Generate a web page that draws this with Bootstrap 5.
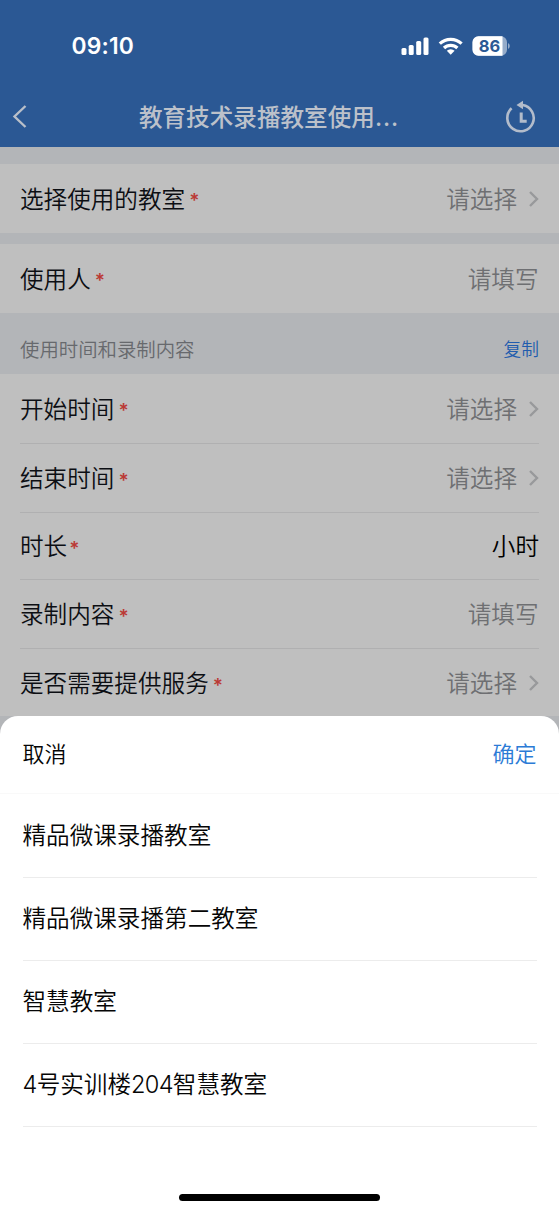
<!DOCTYPE html>
<html lang="zh-CN">
<head>
<meta charset="utf-8">
<meta name="viewport" content="width=device-width, initial-scale=1">
<title>教育技术录播教室使用</title>
<link href="https://cdn.jsdelivr.net/npm/bootstrap@5.3.0/dist/css/bootstrap.min.css" rel="stylesheet">
<style>
  body { font-family: Inter, "Noto Sans CJK SC", sans-serif; font-size: 23.6px; font-weight: 350; line-height: 34px; color: #0c0e13; background: #b3b5b8; }
  svg { display: block; flex: none; }
  .app-head { height: 147px; background: #2b5894; }
  .status-bar { height: 87px; padding: 4px 49.5px 0 71.5px; }
  .clock { font-size: 22.8px; font-weight: 600; letter-spacing: .2px; }
  .title-bar { height: 60px; padding: 0 22px 0 12px; color: #bcc1ca; }
  .title-text { font-weight: 500; padding: 1px 0 0 5px; }
  .dots { letter-spacing: .9px; }
  .form-area { height: 568.5px; padding-top: 17px; overflow: hidden; }
  .form-row { height: 69px; padding: 0 20px; background: #bfbfbf; }
  .form-row span { position: relative; top: 1px; }
  .gap-row { margin-bottom: 11px; }
  .req { color: #bb3a35; font-size: 19px; font-weight: 600; line-height: 20px; margin-left: 4px; padding-top: 3px; font-family: Inter, sans-serif; }
  .req-tight { margin-left: 2px; }
  .hint { color: #6e6f72; }
  .pick { margin-right: 10px; }
  .fill { margin-right: .5px; }
  .group-head { height: 61px; padding: 13px 20px 0; font-size: 19.4px; color: #67696d; }
  .copy-link { font-size: 17.7px; color: #215cae; }
  .lined > .form-row + .form-row > div { border-top: 1px solid #b0b0b1; }
  .sheet { height: 496.5px; background: #fff; border-radius: 18px 18px 0 0; color: #050505; }
  .sheet-head { height: 78.5px; padding: 0 22.5px 1px; font-size: 22px; border-bottom: 1px solid #f9f9f9; }
  .ok { color: #2b7bd6; }
  .option-list { padding: 0 22.5px; }
  .option { height: 83.1px; border-bottom: 1px solid #ececec; }
  .option:first-child { height: 84px; }
  .num { letter-spacing: -.7px; }
  .home-bar { width: 201px; height: 7px; margin-bottom: 11.5px; background: #000; }
</style>
</head>
<body>
<header class="app-head">
  <div class="status-bar d-flex align-items-center justify-content-between text-white">
    <span class="clock">09:10</span>
    <svg width="109" height="22" viewBox="0 0 109 22" fill="#fff">
      <rect x="0.5" y="13" width="5" height="7" rx="1.5"/>
      <rect x="7.7" y="10" width="5" height="10" rx="1.5"/>
      <rect x="15.2" y="6" width="5" height="14" rx="1.5"/>
      <rect x="22.5" y="2.5" width="5" height="17.5" rx="1.5"/>
      <g fill="none" stroke="#fff" stroke-width="3.2">
        <path d="M38.8 8.7a15.7 15.7 0 0 1 21.8 0"/>
        <path d="M43 13a9.6 9.6 0 0 1 13.4 0"/>
      </g>
      <path d="M45.8 15.8a5.7 5.7 0 0 1 7.8 0L49.7 19.8z"/>
      <path d="M77.5 1.2h22.5a6 6 0 0 1 6 6v7.5a6 6 0 0 1-6 6h-22.5a6 6 0 0 1-6-6v-7.5a6 6 0 0 1 6-6z" fill="#95abc9"/>
      <path d="M77.5 1.2h24v19.500h-24a6 6 0 0 1-6-6v-7.500a6 6 0 0 1 6-6z"/>
      <path d="M107 8v6q1.800-1 1.800-3t-1.800-3z" fill="#95abc9"/>
      <text x="88.500" y="17" text-anchor="middle" font-family="Inter, sans-serif" font-size="16.500" font-weight="700" fill="#2b5894">86</text>
    </svg>
  </div>
  <div class="title-bar d-flex align-items-center justify-content-between">
    <svg width="16" height="24" viewBox="0 0 16 24" fill="none" stroke="#b9bfc9" stroke-width="2.400"><path d="M13.500 1 2.500 11.500l11 10.500"/></svg>
    <span class="title-text">教育技术录播教室使用<span class="dots">...</span></span>
    <svg width="32" height="34" viewBox="0 0 32 34" fill="none" stroke="#b3bccb" stroke-width="2.600">
      <path d="M6.600 8.300a13.200 13.200 0 1 0 11-3.300"/>
      <path d="M16.200 12.500v8.700h5.500" stroke-width="3"/>
      <path d="M11.500 5 18 .8v8.400z" fill="#b3bccb" stroke="none"/>
    </svg>
  </div>
</header>

<svg class="d-none"><symbol id="chev" viewBox="0 0 12 18"><path d="M3 2 10 9l-7 7" fill="none" stroke="#98999b" stroke-width="2.400"/></symbol></svg>

<main class="form-area">
  <div class="form-row gap-row d-flex align-items-center">
    <span>选择使用的教室</span><span class="req">*</span>
    <span class="hint ms-auto pick">请选择</span><svg width="12" height="18"><use href="#chev"/></svg>
  </div>
  <div class="form-row d-flex align-items-center">
    <span>使用人</span><span class="req">*</span><span class="hint ms-auto fill">请填写</span>
  </div>
  <div class="group-head d-flex align-items-center justify-content-between">
    <span>使用时间和录制内容</span><span class="copy-link">复制</span>
  </div>
  <div class="lined">
    <div class="form-row"><div class="h-100 d-flex align-items-center">
      <span>开始时间</span><span class="req">*</span>
      <span class="hint ms-auto pick">请选择</span><svg width="12" height="18"><use href="#chev"/></svg>
    </div></div>
    <div class="form-row"><div class="h-100 d-flex align-items-center">
      <span>结束时间</span><span class="req">*</span>
      <span class="hint ms-auto pick">请选择</span><svg width="12" height="18"><use href="#chev"/></svg>
    </div></div>
    <div class="form-row" style="height:67px"><div class="h-100 d-flex align-items-center">
      <span>时长</span><span class="req req-tight">*</span><span class="ms-auto text-black">小时</span>
    </div></div>
    <div class="form-row"><div class="h-100 d-flex align-items-center">
      <span>录制内容</span><span class="req">*</span><span class="hint ms-auto fill">请填写</span>
    </div></div>
    <div class="form-row"><div class="h-100 d-flex align-items-center">
      <span>是否需要提供服务</span><span class="req">*</span>
      <span class="hint ms-auto pick">请选择</span><svg width="12" height="18"><use href="#chev"/></svg>
    </div></div>
  </div>
</main>

<section class="sheet d-flex flex-column">
  <div class="sheet-head d-flex align-items-center justify-content-between">
    <span>取消</span><span class="ok">确定</span>
  </div>
  <div class="option-list">
    <div class="option d-flex align-items-center">精品微课录播教室</div>
    <div class="option d-flex align-items-center">精品微课录播第二教室</div>
    <div class="option d-flex align-items-center">智慧教室</div>
    <div class="option d-flex align-items-center"><span><span class="num">4</span>号实训楼<span class="num">204</span>智慧教室</span></div>
  </div>
  <div class="home-bar rounded-pill mx-auto mt-auto"></div>
</section>
<script src="https://cdn.jsdelivr.net/npm/bootstrap@5.3.0/dist/js/bootstrap.bundle.min.js"></script>
</body>
</html>
